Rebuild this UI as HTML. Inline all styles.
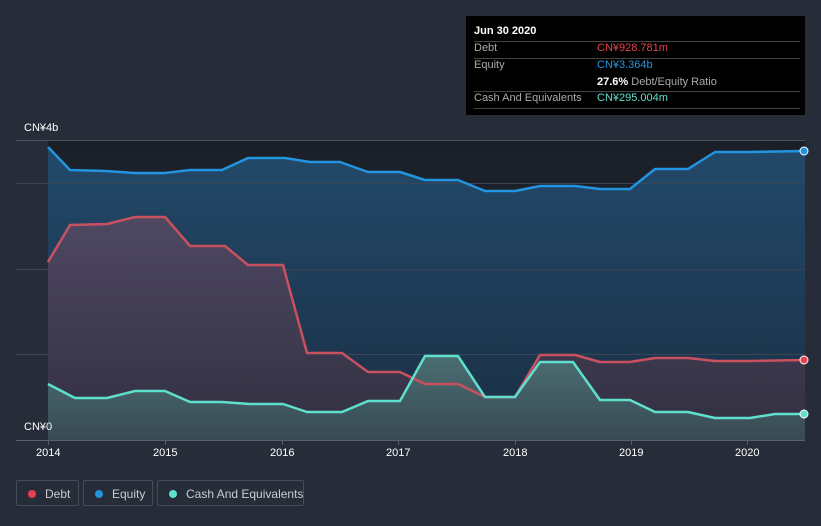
<!DOCTYPE html>
<html><head><meta charset="utf-8"><style>
body{margin:0;width:821px;height:526px;background:#262c38;font-family:"Liberation Sans",sans-serif;overflow:hidden;position:relative}
.tt{position:absolute;left:466px;top:16px;width:339px;height:99px;background:#000;color:#fff;font-size:11px}
.tt .r{position:absolute;left:8px;right:5px;border-top:1px solid #444}
.tt span{position:absolute;white-space:nowrap}
.lg{position:absolute;top:480px;height:26px;border:1px solid #464c58;border-radius:2px;color:#c8ccd2;font-size:12px;line-height:26px;box-sizing:border-box;white-space:nowrap}
.lg i{position:absolute;left:11px;top:9px;width:8px;height:8px;border-radius:50%}
.lg b{font-weight:normal;position:absolute;left:28px;white-space:nowrap}
.ax{position:absolute;color:#fff;font-size:11px}
</style></head><body>
<svg width="821" height="526" style="position:absolute;left:0;top:0">
<defs>
<linearGradient id="pb" x1="0" y1="0" x2="0" y2="1"><stop offset="0" stop-color="#1b1f27"/><stop offset="1" stop-color="#232a36"/></linearGradient>
<linearGradient id="eq" x1="0" y1="0" x2="0" y2="1"><stop offset="0" stop-color="#22496a"/><stop offset="1" stop-color="#1b2f44"/></linearGradient>
<linearGradient id="db" x1="0" y1="0" x2="0" y2="1"><stop offset="0" stop-color="#4e4862"/><stop offset="1" stop-color="#322f40"/></linearGradient>
<linearGradient id="ca" x1="0" y1="0" x2="0" y2="1"><stop offset="0" stop-color="#4a6e72"/><stop offset="1" stop-color="#394a54"/></linearGradient>
</defs>
<rect x="48" y="140" width="757" height="300" fill="url(#pb)"/>
<polygon fill="url(#eq)" points="48,440 48,147 70,170 105,171 135,173 165,173 190,170 222,170 248,158 285,158 310,162 340,162 368,172 400,172 425,180 458,180 485,191 515,191 540,186 575,186 600,189 630,189 655,169 688,169 715,152 750,152 805,151 805,440"/>
<g stroke="#3a4656" stroke-width="1"><line x1="16" y1="183.5" x2="805" y2="183.5"/><line x1="16" y1="269.5" x2="805" y2="269.5"/><line x1="16" y1="354.5" x2="805" y2="354.5"/></g>
<line x1="16" y1="140.5" x2="805" y2="140.5" stroke="#4a505c"/>
<polygon fill="url(#db)" points="48,440 48,262 70,225 107,224 135,217 165,217 190,246 225,246 248,265 283,265 307,353 342,353 368,372 400,372 425,384 458,384 485,397 515,397 540,355 575,355 600,362 630,362 655,358 688,358 715,361 750,361 805,360 805,440"/>
<polygon fill="url(#ca)" points="48,440 48,384 75,398 107,398 135,391 165,391 190,402 222,402 250,404 283,404 307,412 342,412 368,401 400,401 425,356 458,356 485,397 515,397 540,362 573,362 600,400 630,400 655,412 688,412 715,418 750,418 775,414 805,414 805,440"/>
<g fill="none" stroke-width="2.5" stroke-linejoin="round">
<polyline stroke="#2394df" points="48,147 70,170 105,171 135,173 165,173 190,170 222,170 248,158 285,158 310,162 340,162 368,172 400,172 425,180 458,180 485,191 515,191 540,186 575,186 600,189 630,189 655,169 688,169 715,152 750,152 805,151"/>
<polyline stroke="#c9505f" points="48,262 70,225 107,224 135,217 165,217 190,246 225,246 248,265 283,265 307,353 342,353 368,372 400,372 425,384 458,384 485,397 515,397 540,355 575,355 600,362 630,362 655,358 688,358 715,361 750,361 805,360"/>
<polyline stroke="#5fe0cc" points="48,384 75,398 107,398 135,391 165,391 190,402 222,402 250,404 283,404 307,412 342,412 368,401 400,401 425,356 458,356 485,397 515,397 540,362 573,362 600,400 630,400 655,412 688,412 715,418 750,418 775,414 805,414"/>
</g>
<circle cx="804" cy="151" r="4" fill="#2394df" stroke="#fff" stroke-width="1"/>
<circle cx="804" cy="360" r="4" fill="#e84050" stroke="#fff" stroke-width="1"/>
<circle cx="804" cy="414" r="4" fill="#5fe0cc" stroke="#fff" stroke-width="1"/>
<line x1="16" y1="440.5" x2="805" y2="440.5" stroke="#5a606c"/>
<g stroke="#5a606c"><line x1="48.5" y1="440" x2="48.5" y2="445"/><line x1="165.5" y1="440" x2="165.5" y2="445"/><line x1="282.5" y1="440" x2="282.5" y2="445"/><line x1="398.5" y1="440" x2="398.5" y2="445"/><line x1="515.5" y1="440" x2="515.5" y2="445"/><line x1="631.5" y1="440" x2="631.5" y2="445"/><line x1="747.5" y1="440" x2="747.5" y2="445"/></g>
</svg>
<div class="ax" style="left:24px;top:122px">CN¥4b</div>
<div class="ax" style="left:24px;top:421px">CN¥0</div>
<div class="ax" style="left:36px;top:447px">2014</div>
<div class="ax" style="left:153px;top:447px">2015</div>
<div class="ax" style="left:270px;top:447px">2016</div>
<div class="ax" style="left:386px;top:447px">2017</div>
<div class="ax" style="left:503px;top:447px">2018</div>
<div class="ax" style="left:619px;top:447px">2019</div>
<div class="ax" style="left:735px;top:447px">2020</div>
<div class="tt">
<span style="left:8px;top:9px;font-weight:bold">Jun 30 2020</span>
<div class="r" style="top:25px"></div>
<span style="left:8px;top:26px;color:#aaa">Debt</span><span style="left:131px;top:26px;color:#e8424c">CN¥928.781m</span>
<div class="r" style="top:42px"></div>
<span style="left:8px;top:43px;color:#aaa">Equity</span><span style="left:131px;top:43px;color:#2394df">CN¥3.364b</span>
<span style="left:131px;top:60px"><b>27.6%</b> <span style="position:static;color:#aaa">Debt/Equity Ratio</span></span>
<div class="r" style="top:75px"></div>
<span style="left:8px;top:76px;color:#aaa">Cash And Equivalents</span><span style="left:131px;top:76px;color:#5fe0cc">CN¥295.004m</span>
<div class="r" style="top:92px"></div>
</div>
<div class="lg" style="left:16px;width:63px"><i style="background:#e84050"></i><b>Debt</b></div>
<div class="lg" style="left:83px;width:70px"><i style="background:#2394df"></i><b>Equity</b></div>
<div class="lg" style="left:157px;width:147px"><i style="background:#5fe0cc"></i><b>Cash And Equivalents</b></div>
</body></html>
